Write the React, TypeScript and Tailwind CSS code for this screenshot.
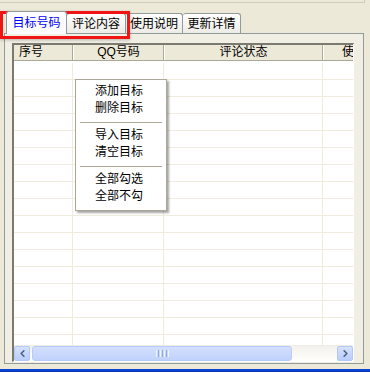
import { ChevronLeft, ChevronRight } from 'lucide-react';

const tabs = ['目标号码', '评论内容', '使用说明', '更新详情'];
const tabWidths = ['w-[61px]', 'w-[59px]', 'w-[57px]', 'w-[58px]'];

const menuGroups = [
  ['添加目标', '删除目标'],
  ['导入目标', '清空目标'],
  ['全部勾选', '全部不勾'],
];

const rows = Array.from({ length: 17 }, (_, i) => i);

function ScrollButton({ dir }: { dir: 'left' | 'right' }) {
  return (
    <div className="w-[16px] h-[15px] rounded-[2px] border border-[#B4C8F6] bg-gradient-to-b from-[#D6E2FD] to-[#B9CDFA] flex items-center justify-center">
      {dir === 'left' ? (
        <ChevronLeft size={11} strokeWidth={3.5} color="#4D6185" />
      ) : (
        <ChevronRight size={11} strokeWidth={3.5} color="#4D6185" />
      )}
    </div>
  );
}

export default function App() {
  return (
    <div className="relative w-[370px] h-[372px] overflow-hidden bg-[#ECE9D8] font-['Liberation_Sans','Noto_Sans_CJK_SC',sans-serif] text-[12px] text-black flex flex-col">
      {/* edge of the box above */}
      <div className="h-[3px] w-[365px] border-b border-r border-[#D0CDBD]" />

      {/* tabs */}
      <div className="mt-[8px] h-[22px] pl-[6px] flex items-end">
        {tabs.map((t, i) =>
          i === 0 ? (
            <div
              key={t}
              className={`${tabWidths[i]} h-[23px] -mb-px z-10 relative rounded-t-[3px] border border-b-0 border-[#919B9C] bg-[#FCFCFE] text-[#0000FF] flex items-center justify-center`}
            >
              {t}
            </div>
          ) : (
            <div
              key={t}
              className={`${tabWidths[i]} h-[20px] rounded-t-[3px] border border-b-0 border-l-0 border-[#919B9C] bg-gradient-to-b from-[#FFFFFF] to-[#ECEBE6] flex items-center justify-center`}
            >
              {t}
            </div>
          )
        )}
      </div>

      {/* tab panel */}
      <div className="ml-[4px] w-[360px] h-[331px] border border-[#919B9C] bg-[#F1EFE4] pl-[7px] pt-[9px]">
        <div className="w-[342px] h-[319px] flex flex-col border-t-2 border-l-2 border-r border-b border-t-[#7B7A70] border-l-[#7B7A70] border-r-[#FFFFFF] border-b-[#FFFFFF] bg-white overflow-hidden">
          {/* header */}
          <div className="h-[16px] flex bg-[#ECE9D8] border-b border-[#ACA899] whitespace-nowrap">
            <div className="w-[59px] shrink-0 border-r border-[#ACA899] pl-[5px] leading-[15px]">序号</div>
            <div className="w-[91px] shrink-0 border-r border-[#ACA899] border-l border-l-white text-center leading-[15px]">QQ号码</div>
            <div className="w-[159px] shrink-0 border-r border-[#ACA899] border-l border-l-white text-center leading-[15px]">评论状态</div>
            <div className="flex-1 border-l border-l-white pl-[18px] leading-[15px]">使</div>
          </div>

          {/* body */}
          <div className="flex-1 overflow-hidden pt-[2px]">
            {rows.map((r) => (
              <div key={r} className="h-[17px] flex border-b border-[#EFEBDE]">
                <div className="w-[59px] shrink-0 border-r border-[#EFEBDE]" />
                <div className="w-[91px] shrink-0 border-r border-[#EFEBDE]" />
                <div className="w-[159px] shrink-0 border-r border-[#EFEBDE]" />
                <div className="flex-1" />
              </div>
            ))}
          </div>

          {/* horizontal scrollbar */}
          <div className="h-[16px] flex items-center gap-[2px] bg-gradient-to-b from-[#F3F1EC] to-[#FEFEFB] border-t border-[#EEEDE5]">
            <ScrollButton dir="left" />
            <div className="w-[260px] h-[15px] rounded-[3px] border border-[#B8CBF6] bg-gradient-to-b from-[#D3DFFD] to-[#C1D2FB] flex items-center justify-center">
              <div className="flex gap-[1px]">
                <div className="w-[1px] h-[7px] bg-[#EEF4FE]" />
                <div className="w-[1px] h-[7px] bg-[#8CA7EB]" />
                <div className="w-[1px] h-[7px] bg-[#EEF4FE]" />
                <div className="w-[1px] h-[7px] bg-[#8CA7EB]" />
                <div className="w-[1px] h-[7px] bg-[#EEF4FE]" />
                <div className="w-[1px] h-[7px] bg-[#8CA7EB]" />
                <div className="w-[1px] h-[7px] bg-[#EEF4FE]" />
              </div>
            </div>
            <div className="flex-1" />
            <ScrollButton dir="right" />
          </div>
        </div>
      </div>

      {/* window frame */}
      <div className="mt-[5px] h-[3px] bg-[#0A43D8] border-b border-[#0832B0]" />

      {/* highlight box */}
      <div className="absolute left-0 top-[11px] w-[130px] h-[28px] border-[3px] border-[#F01414] shadow-[0_1px_3px_rgba(0,0,0,0.25)]" />

      {/* context menu */}
      <div className="absolute left-[75px] top-[79px] w-[92px] bg-white border border-[#ACA899] pt-[3px] pb-[5px] shadow-[2px_2px_2px_rgba(0,0,0,0.35)]">
        {menuGroups.map((g, gi) => (
          <div key={gi}>
            {gi > 0 && (
              <div className="h-[10px] flex items-center px-[4px]">
                <div className="h-px w-full bg-[#ACA899]" />
              </div>
            )}
            {g.map((item) => (
              <div key={item} className="h-[17px] pl-[19px] leading-[17px]">
                {item}
              </div>
            ))}
          </div>
        ))}
      </div>
    </div>
  );
}
